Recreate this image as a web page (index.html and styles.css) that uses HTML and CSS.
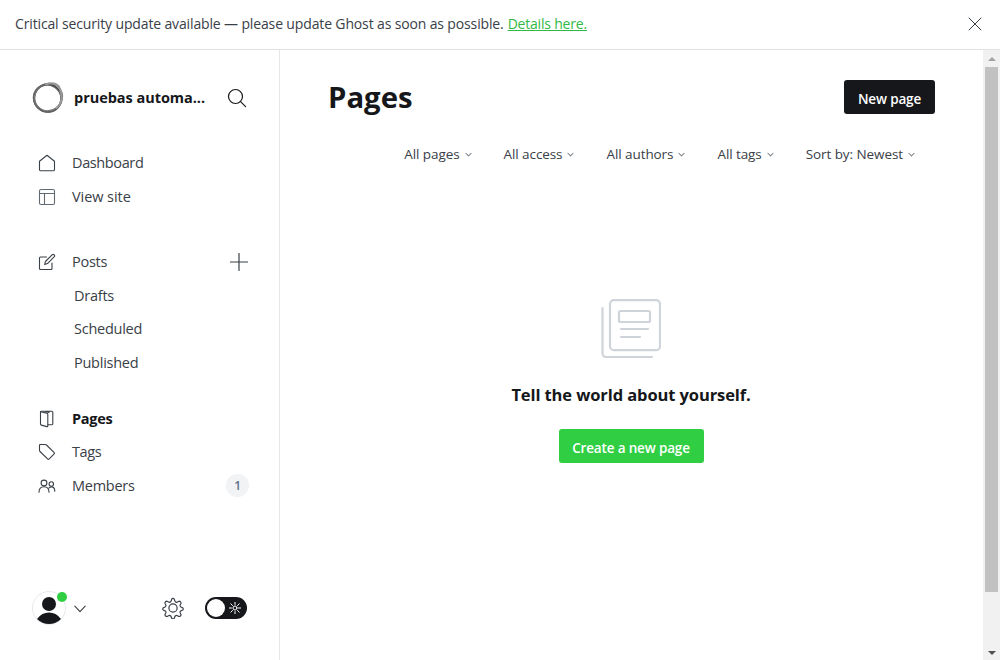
FILE: index.html
```html
<!DOCTYPE html>
<html lang="en">
<head>
<meta charset="utf-8">
<title>Pages</title>
<link rel="stylesheet" href="styles.css">
</head>
<body>
<div class="app">
  <header class="banner">
    <p class="banner-text"><span class="banner-message">Critical security update available — please update Ghost as soon as possible.</span><a class="banner-link" href="#">Details here.</a></p>
    <svg class="banner-close" viewBox="0 0 14 14"><path d="M1 1l12 12M13 1L1 13"/></svg>
  </header>
  <div class="body">
    <aside class="sidebar">
      <div class="site">
        <svg class="site-logo" viewBox="0 0 32 32">
          <ellipse cx="15.700" cy="16.200" rx="13.600" ry="13.600" stroke="#3c3c3c" stroke-width="2"/>
          <ellipse cx="16.800" cy="15.700" rx="14.200" ry="13.400" stroke="#777" stroke-width="1.500" transform="rotate(-38 16 16)"/>
          <ellipse cx="15.700" cy="16.700" rx="14.300" ry="13.300" stroke="#666" stroke-width="1.200" transform="rotate(35 16 16)"/>
          <path d="M14 2.500c5-2 10-1 13 2M27.500 6c3.500 8 2.500 15-3 20" stroke="#999" stroke-width="2"/>
        </svg>
        <span class="site-name">pruebas automa...</span>
        <svg class="search" viewBox="0 0 20 20"><circle cx="8.500" cy="8.500" r="7"/><path d="M13.600 13.600l5 5"/></svg>
      </div>
      <nav class="nav">
        <ul class="group">
          <li class="item"><svg class="icon" viewBox="0 0 18 18"><path d="M1.500 7.200L9 1.200l7.500 6v8.600q0 .9-.9.900H2.400q-.9 0-.9-.9z"/></svg><span class="tight">Dashboard</span></li>
          <li class="item"><svg class="icon muted" viewBox="0 0 18 18"><rect x="1.500" y="1.500" width="15" height="15" rx="1.500"/><path d="M1.500 5.500h15M6.500 5.500v11"/></svg><span class="loose">View site</span></li>
        </ul>
        <ul class="group posts">
          <li class="item"><svg class="icon" viewBox="0 0 18 18"><path d="M8.500 4H2.500q-1 0-1 1v10.500q0 1 1 1H13q1 0 1-1V10"/><path d="M6.700 11.500l.7-3L14.300 1.700q1-.8 1.900.1t.1 1.900L9.500 10.600z"/></svg><span>Posts</span><svg class="plus" viewBox="0 0 18 18"><path d="M9 .5v17M.5 9h17"/></svg></li>
          <li class="item sub"><span>Drafts</span></li>
          <li class="item sub"><span>Scheduled</span></li>
          <li class="item sub"><span>Published</span></li>
        </ul>
        <ul class="group">
          <li class="item active"><svg class="icon" viewBox="0 0 18 18"><path d="M2.500 1.800l6.300 1.300q1 .2 1 1.200V16q0 .9-.9.600l-5.600-1.500q-.8-.2-.8-1z"/><path d="M2.500 1.800Q2.800 1.200 3.700 1.200h10q1.100 0 1.100 1v11.600q0 .9-1 .9h-3.700M7.500 1.400l3.600 1"/></svg><span>Pages</span></li>
          <li class="item"><svg class="icon" viewBox="0 0 18 18"><path d="M1.500 2.300q0-.8.8-.8h5q.7 0 1.200.5l7.700 7.700q.6.600 0 1.200l-5.200 5.200q-.6.600-1.200 0L2 8.500q-.5-.5-.5-1.200z"/></svg><span class="tight">Tags</span></li>
          <li class="item"><svg class="icon" viewBox="0 0 18 18"><circle cx="6" cy="6" r="2.900"/><circle cx="13.300" cy="7" r="2.200"/><path d="M1 15.300q0-5.600 5-5.600t5 5.600M11 11q1-1.100 2.400-1.100 3.400 0 3.400 4.400"/></svg><span>Members</span><span class="count">1</span></li>
        </ul>
      </nav>
      <footer class="tools">
        <div class="avatar">
          <svg class="avatar-picture" viewBox="0 0 34 34"><circle cx="17" cy="17" r="16.500" fill="#fff" stroke="#e5e9ed"/><circle cx="17" cy="13" r="7" fill="#15171a" stroke="none"/><path d="M5 28Q10 21.600 17 21.600T29 28Q24 33 17 33T5 28z" fill="#15171a" stroke="none"/></svg>
          <span class="online"></span>
        </div>
        <svg class="chevron" viewBox="0 0 12 8"><path d="M.8 1.200L6 6.600l5.200-5.400"/></svg>
        <svg class="gear" viewBox="0 0 24 24"><circle cx="12" cy="12" r="4.500"/><path d="M13.500 2.600l.5 1.700a2 2 0 0 0 2.900 1.200l1.600-.9a2 2 0 0 1 2.200 2.400l-.8 1.500a2 2 0 0 0 1.200 2.700l1.100.4a1.500 1.500 0 0 1 0 2.800l-1.100.4a2 2 0 0 0-1.200 2.700l.8 1.500a2 2 0 0 1-2.400 2.200l-1.400-.8a2 2 0 0 0-2.900 1.200l-.5 1.300a1.600 1.600 0 0 1-3 0l-.5-1.300a2 2 0 0 0-2.900-1.200l-1.400.8A2 2 0 0 1 3.300 19l.8-1.500a2 2 0 0 0-1.200-2.700l-1.100-.4a1.500 1.500 0 0 1 0-2.800l1.100-.4a2 2 0 0 0 1.200-2.700L3.300 7a2 2 0 0 1 2.200-2.400l1.600.9A2 2 0 0 0 10 4.300l.5-1.700a1.600 1.600 0 0 1 3 0z"/></svg>
        <div class="toggle"><span class="knob"></span><svg class="sun" viewBox="0 0 12 12"><circle cx="6" cy="6" r="2"/><path d="M6 0v2.500M6 9.500V12M0 6h2.500M9.500 6H12M1.800 1.800l1.700 1.700M8.500 8.500l1.700 1.700M10.200 1.800L8.500 3.500M3.500 8.500l-1.700 1.700"/></svg></div>
      </footer>
    </aside>
    <main class="main">
      <div class="heading"><h1 class="title">Pages</h1><button class="button dark">New page</button></div>
      <div class="filters">
        <div class="filter"><span>All pages</span><svg class="caret" viewBox="0 0 8 6"><path d="M1 1l3 3 3-3"/></svg></div>
        <div class="filter"><span>All access</span><svg class="caret" viewBox="0 0 8 6"><path d="M1 1l3 3 3-3"/></svg></div>
        <div class="filter"><span>All authors</span><svg class="caret" viewBox="0 0 8 6"><path d="M1 1l3 3 3-3"/></svg></div>
        <div class="filter"><span>All tags</span><svg class="caret" viewBox="0 0 8 6"><path d="M1 1l3 3 3-3"/></svg></div>
        <div class="filter"><span>Sort by: Newest</span><svg class="caret" viewBox="0 0 8 6"><path d="M1 1l3 3 3-3"/></svg></div>
      </div>
      <section class="empty">
        <svg class="empty-art" viewBox="0 0 60 60"><rect x="9" y="1.200" width="50" height="50" rx="4"/><rect x="18" y="12" width="31" height="11" rx="1.500"/><path d="M20 30h27M20 38h19M1.500 9v45q0 4 4 4H51"/></svg>
        <h2 class="empty-title">Tell the world about yourself.</h2>
        <button class="button green">Create a new page</button>
      </section>
    </main>
    <div class="scrollbar"><span class="arrow up"></span><span class="thumb"></span><span class="arrow down"></span></div>
  </div>
</div>
</body>
</html>
```
FILE: styles.css
```css
* { box-sizing: border-box; }
body { margin: 0; background: #fff; color: #394047; font-family: "Open Sans", "Noto Sans", sans-serif; font-size: 14px; }
h1, h2, p, ul { margin: 0; padding: 0; }
svg { display: block; flex: none; fill: none; stroke: #394047; stroke-linecap: round; stroke-linejoin: round; }
span, a { white-space: nowrap; }
.app { display: flex; flex-direction: column; width: 1000px; height: 660px; overflow: hidden; }
.banner { display: flex; flex: none; align-items: center; justify-content: space-between; height: 50px; padding: 0 18px 2px 15px; border-bottom: 1px solid #dfe1e3; }
.banner-text { display: flex; gap: 4px; font-size: 14px; line-height: 20px; letter-spacing: -.14px; }
.banner-link { color: #30b943; letter-spacing: -.2px; text-decoration: underline; }
.banner-close { width: 14px; height: 14px; stroke-width: 1; }
.body { display: flex; flex: 1; min-height: 0; }
.sidebar { display: flex; flex: none; flex-direction: column; width: 280px; border-right: 1px solid #e5e7e9; }
.site { display: flex; align-items: center; height: 32px; margin: 32px 32px 0; }
.site-logo { width: 32px; height: 32px; }
.site-name { width: 153px; margin-left: 10px; padding-bottom: 2px; color: #15171a; font-size: 14.5px; font-weight: 700; letter-spacing: -.04px; }
.search { width: 20px; height: 20px; stroke: #15171a; stroke-width: 1.2; }
.nav { display: flex; flex-direction: column; gap: 32px; margin-top: 32.3px; }
.group { display: flex; flex-direction: column; list-style: none; }
.posts { margin-bottom: -10px; }
.item { display: flex; align-items: center; height: 33.6px; padding: 0 30px 0 38px; color: #394047; font-size: 14.5px; line-height: 20px; letter-spacing: -.25px; }
.item.sub { padding-left: 74px; }
.item.active { color: #15171a; font-weight: 700; }
.tight { letter-spacing: -.38px; }
.loose { letter-spacing: -.07px; }
.icon { width: 18px; height: 18px; margin-right: 16px; stroke-width: 1.1; }
.icon.muted { stroke: #626a71; }
.plus { width: 18px; height: 18px; margin-left: auto; margin-right: 1px; stroke-width: 1.2; }
.count { width: 23px; height: 23px; margin-left: auto; border-radius: 12px; background: #f1f3f5; color: #60718a; font-size: 12px; font-weight: 600; line-height: 24px; text-align: center; }
.tools { display: flex; align-items: center; height: 34px; margin: auto 32px 35px; }
.avatar { position: relative; width: 34px; height: 34px; }
.avatar-picture { width: 34px; height: 34px; }
.online { position: absolute; top: 1px; right: -1px; width: 10px; height: 10px; border-radius: 50%; background: #30cf43; }
.chevron { width: 12px; height: 8px; margin-top: 1px; margin-left: 8px; stroke-width: 1.1; }
.gear { width: 22px; height: 22px; margin-left: 76px; stroke-width: 1.3; }
.toggle { display: flex; align-items: center; justify-content: space-between; width: 42px; height: 22px; margin-left: 21px; padding: 0 6px 0 2px; border-radius: 11px; background: #15171a; }
.knob { width: 18px; height: 18px; border-radius: 50%; background: #fff; }
.sun { width: 12px; height: 12px; stroke: #fff; stroke-width: 1; }
.main { flex: 1; min-width: 0; padding: 30px 48px 0 48px; }
.heading { display: flex; align-items: center; justify-content: space-between; height: 34px; }
.title { color: #15171a; font-size: 29.3px; font-weight: 700; line-height: 34px; }
.button { display: flex; align-items: center; justify-content: center; height: 34px; padding: 2px 0 0; border: 0; border-radius: 3px; color: #fff; font: 600 13.5px/20px "Open Sans", sans-serif; letter-spacing: -.16px; white-space: nowrap; }
.dark { width: 91px; padding-top: 3px; background: #15171a; }
.green { width: 145px; padding-top: 3px; background: #30cf43; }
.filters { display: flex; justify-content: flex-end; gap: 32px; margin: 30px 20px 0 0; font-size: 13.5px; line-height: 20px; letter-spacing: -.08px; }
.filter { display: flex; align-items: center; gap: 5px; }
.caret { width: 7px; height: 6px; margin-top: 2px; stroke: #7c8288; stroke-width: 1.2; }
.empty { display: flex; flex-direction: column; align-items: center; margin: 135px 1px 0 0; }
.empty-art { width: 60px; height: 60px; stroke: #ced4d9; stroke-width: 2.2; }
.empty-title { margin: 24px 0 22px; color: #15171a; font-size: 16.5px; font-weight: 700; line-height: 24px; letter-spacing: -.1px; white-space: nowrap; }
.scrollbar { display: flex; flex: none; flex-direction: column; align-items: center; width: 17px; background: #f1f1f1; }
.arrow { width: 0; height: 0; border: 4px solid transparent; }
.up { margin: 3px 0 6px; border-bottom-color: #a3a3a3; }
.thumb { width: 13px; height: 525px; background: #c1c1c1; }
.down { margin-top: auto; margin-bottom: 1px; border-top-color: #505050; }
```
